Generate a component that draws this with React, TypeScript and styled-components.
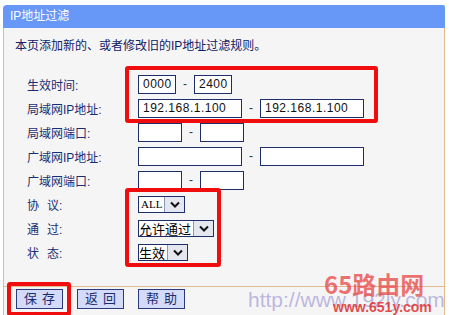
import React from "react";
import styled, { createGlobalStyle } from "styled-components";

const GlobalStyle = createGlobalStyle`
  html, body {
    margin: 0;
    padding: 0;
    background: #ffffff;
  }
  body {
    font-family: "Liberation Sans", "Noto Sans CJK SC", sans-serif;
  }
`;

const Page = styled.div`
  position: relative;
  width: 449px;
  height: 315px;
  overflow: hidden;
  padding-top: 5px;
  box-sizing: border-box;
`;

const Panel = styled.div`
  margin-left: 3px;
  width: 442px;
  display: flex;
  flex-direction: column;
`;

const Header = styled.div`
  height: 23px;
  background: #6797f7;
  border-radius: 4px 2px 0 0;
  color: #ffffff;
  font-size: 12px;
  line-height: 23px;
  padding-left: 7px;
`;

const Body = styled.div`
  background: #f5f5f5;
  border-left: 1px solid #e3b98e;
  border-right: 1px solid #e3b98e;
  height: 258px;
  box-sizing: border-box;
  padding: 9px 0 0 11px;
`;

const Intro = styled.div`
  font-size: 12px;
  line-height: 18px;
  color: #112166;
`;

const Form = styled.div`
  display: grid;
  grid-template-columns: 111px auto;
  grid-auto-rows: 24px;
  margin-top: 17px;
  padding-left: 12px;
`;

const Label = styled.div`
  display: flex;
  align-items: center;
  font-size: 12px;
  color: #1b2d72;
`;

const Spread = styled.span`
  margin-right: 8px;
`;

const Field = styled.div`
  display: flex;
  align-items: center;
`;

const TextInput = styled.div<{ $w: number }>`
  width: ${(p) => p.$w}px;
  height: 19px;
  box-sizing: border-box;
  border: 1px solid #1e2d6b;
  background: #ffffff;
  font-size: 12px;
  line-height: 17px;
  padding-left: 4px;
  color: #111;
  letter-spacing: 0.5px;
`;

const Dash = styled.span`
  width: 18px;
  text-align: center;
  font-size: 12px;
  color: #333;
`;

const Select = styled.div`
  display: inline-flex;
  height: 17px;
  box-sizing: border-box;
  border: 1px solid #1e2d6b;
  background: #ffffff;
`;

const SelectText = styled.span<{ $small?: boolean }>`
  font-family: ${(p) =>
    p.$small ? '"Liberation Serif", serif' : '"Noto Sans CJK SC", sans-serif'};
  font-size: ${(p) => (p.$small ? "11px" : "13px")};
  line-height: 15px;
  padding: 0 2px 0 ${(p) => (p.$small ? "2px" : "0")};
  color: #000;
`;

const SelectButton = styled.span`
  width: 19px;
  display: flex;
  align-items: center;
  justify-content: center;
  background: #e4e7ef;
  border-left: 1px solid #8f97b5;
`;

const Footer = styled.div`
  height: 27px;
  background: #f5f5f5;
  border: 1px solid #e3b98e;
  display: flex;
  align-items: flex-start;
  gap: 14px;
  padding: 2px 0 0 12px;
`;

const Button = styled.div`
  width: 47px;
  height: 20px;
  box-sizing: border-box;
  border: 1px solid #2a3a7c;
  background: #d4dbf8;
  color: #1b2d72;
  font-size: 13px;
  line-height: 18px;
  text-align: center;
  letter-spacing: 5px;
  text-indent: 5px;
`;

const Highlight = styled.div<{ $x: number; $y: number; $w: number; $h: number }>`
  position: absolute;
  left: ${(p) => p.$x}px;
  top: ${(p) => p.$y}px;
  width: ${(p) => p.$w}px;
  height: ${(p) => p.$h}px;
  box-sizing: border-box;
  border: 4px solid #f00d0d;
  border-radius: 3px;
  pointer-events: none;
`;

const WatermarkUrl = styled.div`
  position: absolute;
  left: 248px;
  top: 288px;
  font-family: "Liberation Sans", sans-serif;
  font-size: 21px;
  color: rgba(150, 140, 205, 0.6);
  white-space: nowrap;
`;

const WatermarkBrand = styled.div`
  position: absolute;
  left: 324px;
  top: 266px;
  font-family: "Noto Sans CJK SC", sans-serif;
  font-weight: 700;
  font-size: 24px;
  color: rgba(232, 70, 70, 0.75);
  white-space: nowrap;
`;

const WatermarkSite = styled.div`
  position: absolute;
  left: 333px;
  top: 299px;
  font-family: "Liberation Sans", sans-serif;
  font-weight: 700;
  font-size: 14px;
  color: rgba(225, 45, 45, 0.85);
  white-space: nowrap;
`;

const Chevron = () => (
  <svg width="10" height="7" viewBox="0 0 10 7">
    <path d="M1 1.5 L5 5.5 L9 1.5" fill="none" stroke="#111" strokeWidth="2" />
  </svg>
);

const DropDown = ({ value, small }: { value: string; small?: boolean }) => (
  <Select>
    <SelectText $small={small}>{value}</SelectText>
    <SelectButton>
      <Chevron />
    </SelectButton>
  </Select>
);

const App = () => (
  <Page>
    <GlobalStyle />
    <Panel>
      <Header>IP地址过滤</Header>
      <Body>
        <Intro>本页添加新的、或者修改旧的IP地址过滤规则。</Intro>
        <Form>
          <Label>生效时间:</Label>
          <Field>
            <TextInput $w={38}>0000</TextInput>
            <Dash>-</Dash>
            <TextInput $w={38}>2400</TextInput>
          </Field>

          <Label>局域网IP地址:</Label>
          <Field>
            <TextInput $w={104}>192.168.1.100</TextInput>
            <Dash>-</Dash>
            <TextInput $w={104}>192.168.1.100</TextInput>
          </Field>

          <Label>局域网端口:</Label>
          <Field>
            <TextInput $w={44} />
            <Dash>-</Dash>
            <TextInput $w={44} />
          </Field>

          <Label>广域网IP地址:</Label>
          <Field>
            <TextInput $w={104} />
            <Dash>-</Dash>
            <TextInput $w={104} />
          </Field>

          <Label>广域网端口:</Label>
          <Field>
            <TextInput $w={44} />
            <Dash>-</Dash>
            <TextInput $w={44} />
          </Field>

          <Label>
            <Spread>协</Spread>议:
          </Label>
          <Field>
            <DropDown value="ALL" small />
          </Field>

          <Label>
            <Spread>通</Spread>过:
          </Label>
          <Field>
            <DropDown value="允许通过" />
          </Field>

          <Label>
            <Spread>状</Spread>态:
          </Label>
          <Field>
            <DropDown value="生效" />
          </Field>
        </Form>
      </Body>
      <Footer>
        <Button>保存</Button>
        <Button>返回</Button>
        <Button>帮助</Button>
      </Footer>
    </Panel>

    <WatermarkUrl>http://www.192ly.com</WatermarkUrl>
    <WatermarkBrand>65路由网</WatermarkBrand>
    <WatermarkSite>www.651y.com</WatermarkSite>

    <Highlight $x={125} $y={66} $w={253} $h={57} />
    <Highlight $x={125} $y={188} $w={96} $h={79} />
    <Highlight $x={7} $y={282} $w={64} $h={34} />
  </Page>
);

export default App;
